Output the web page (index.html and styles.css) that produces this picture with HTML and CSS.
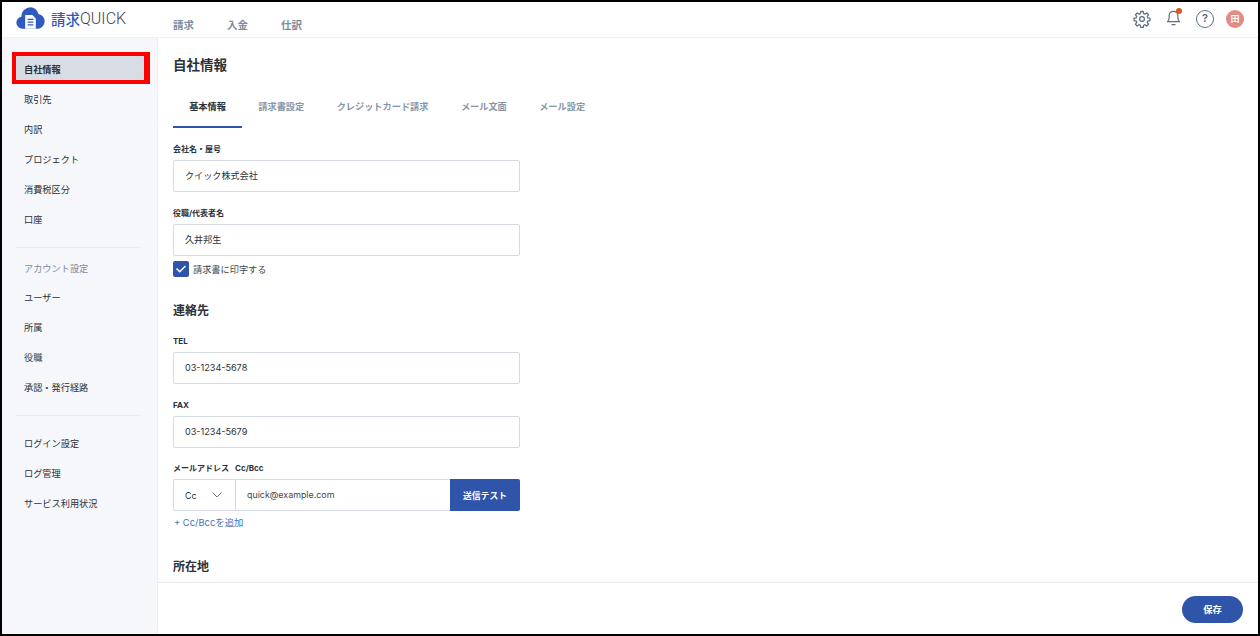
FILE: index.html
```html
<!DOCTYPE html>
<html lang="ja">
<head>
    <meta charset="UTF-8">
    <title>自社情報</title>
    <link rel="stylesheet" href="styles.css">
</head>
<body>
    <div class="frame">
        <header class="topbar">
            <div class="logo">
                <svg class="logo-mark" viewBox="0 0 30 22" width="29" height="22">
                    <path d="M6.500 22a6.200 6.200 0 0 1-1-12.300A9.500 9.500 0 0 1 15 0a8.500 8.500 0 0 1 8.300 6.800A7.700 7.700 0 0 1 23 22z" fill="#2f5bc0"/>
                    <path d="M9.500 8h7.500l3.500 3.500V22h-11z" fill="#fff"/>
                    <path d="M12 12.500h6M12 15.300h6M12 18.100h6" stroke="#2f5bc0" stroke-width="1.200"/>
                </svg>
                <span class="logo-ja">請求</span><span class="logo-en">QUICK</span>
            </div>
            <nav class="topnav">
                <a>請求</a>
                <a>入金</a>
                <a>仕訳</a>
            </nav>
            <div class="tools">
                <svg viewBox="0 0 24 24" width="18" height="18" fill="none" stroke="#5c6f82" stroke-width="1.700" stroke-linejoin="round">
                    <circle cx="12" cy="12" r="3.200"/>
                    <path d="M10.300 2h3.400l.5 2.900 1.700.7 2.400-1.700 2.400 2.400-1.700 2.400.7 1.700 2.900.5v3.400l-2.900.5-.7 1.700 1.700 2.400-2.400 2.400-2.400-1.700-1.700.7-.5 2.900h-3.400l-.5-2.900-1.700-.7-2.400 1.700-2.400-2.400 1.700-2.400-.7-1.700-2.900-.5v-3.400l2.900-.5.7-1.700-1.700-2.400 2.400-2.400 2.400 1.700 1.700-.7z"/>
                </svg>
                <span class="bell">
                    <svg viewBox="0 0 20 22" width="15" height="17" fill="none" stroke="#5c6f82" stroke-width="1.600" stroke-linejoin="round" stroke-linecap="round">
                        <path d="M2 16.500c1.500-1.500 2.200-3 2.200-5.500V8.500a5.800 5.800 0 0 1 11.600 0V11c0 2.500.7 4 2.200 5.500z"/>
                        <path d="M8 20.500h4"/>
                    </svg>
                    <i class="dot"></i>
                </span>
                <span class="help">?</span>
                <span class="avatar">田</span>
            </div>
        </header>
        <div class="body-row">
            <aside class="sidebar">
                <ul class="menu">
                    <li class="active">自社情報<span class="marker"></span></li>
                    <li>取引先</li>
                    <li>内訳</li>
                    <li>プロジェクト</li>
                    <li>消費税区分</li>
                    <li>口座</li>
                </ul>
                <hr class="divider">
                <p class="menu-title">アカウント設定</p>
                <ul class="menu">
                    <li>ユーザー</li>
                    <li>所属</li>
                    <li>役職</li>
                    <li>承認・発行経路</li>
                </ul>
                <hr class="divider second">
                <ul class="menu">
                    <li>ログイン設定</li>
                    <li>ログ管理</li>
                    <li>サービス利用状況</li>
                </ul>
            </aside>
            <div class="main">
                <div class="content">
                    <h1>自社情報</h1>
                    <div class="tabs">
                        <a class="tab current">基本情報</a>
                        <a class="tab">請求書設定</a>
                        <a class="tab">クレジットカード請求</a>
                        <a class="tab">メール文面</a>
                        <a class="tab">メール設定</a>
                    </div>
                    <form class="form">
                        <label class="label">会社名・屋号</label>
                        <div class="input">クイック株式会社</div>
                        <label class="label">役職/代表者名</label>
                        <div class="input">久井邦生</div>
                        <div class="check">
                            <span class="box">
                                <svg viewBox="0 0 16 16" width="16" height="16" fill="none" stroke="#fff" stroke-width="1.500"><path d="M3.500 7.500l3.200 3.200 5.800-5.700"/></svg>
                            </span>
                            請求書に印字する
                        </div>
                        <h2>連絡先</h2>
                        <label class="label">TEL</label>
                        <div class="input">03-1234-5678</div>
                        <label class="label">FAX</label>
                        <div class="input">03-1234-5679</div>
                        <label class="label mail-row"><span class="mail-label">メールアドレス</span>Cc/Bcc</label>
                        <div class="input-group">
                            <div class="select">Cc
                                <svg viewBox="0 0 10 6" width="10" height="6" fill="none" stroke="#6b7785" stroke-width="1"><path d="M.5.500l4.500 4.500 4.500-4.500"/></svg>
                            </div>
                            <div class="mail">quick@example.com</div>
                            <button type="button" class="test">送信テスト</button>
                        </div>
                        <a class="add">+ Cc/Bccを追加</a>
                        <h2 class="place">所在地</h2>
                    </form>
                </div>
                <footer class="footer">
                    <button type="button" class="save">保存</button>
                </footer>
            </div>
        </div>
    </div>
</body>
</html>
```

FILE: styles.css
```css
* {
    box-sizing: border-box;
}
html, body {
    margin: 0;
    height: 100%;
}
body {
    font-family: Inter, "Noto Sans CJK JP", sans-serif;
    color: #2b3138;
    background-color: #fff;
    overflow: hidden;
}
.frame {
    height: 636px;
    border: 2px solid #000;
    display: flex;
    flex-direction: column;
    overflow: hidden;
}

/* top bar */
.topbar {
    height: 36px;
    flex: none;
    display: flex;
    align-items: center;
    border-bottom: 1px solid #eef0f3;
    background-color: #fff;
}
.logo {
    width: 171px;
    padding-left: 14px;
    display: flex;
    align-items: center;
    height: 100%;
    padding-bottom: 3px;
}
.logo-mark {
    margin-right: 6px;
}
.logo-ja {
    font-size: 14.500px;
    font-weight: 500;
    color: #2f5bb5;
}
.logo-en {
    font-family: Roboto, sans-serif;
    font-size: 16px;
    font-weight: 300;
    color: #3d444c;
}
.topnav {
    display: flex;
    gap: 33px;
    padding-top: 10px;
}
.topnav a {
    font-size: 10.500px;
    font-weight: 700;
    color: #7d8d9e;
}
.tools {
    margin-left: auto;
    padding-right: 14px;
    padding-bottom: 1px;
    display: flex;
    align-items: center;
    gap: 12px;
}
.bell {
    position: relative;
    display: flex;
    margin: 0 3px 3px;
}
.dot {
    position: absolute;
    top: -1px;
    right: -1px;
    width: 6px;
    height: 6px;
    border-radius: 50%;
    background-color: #e0561f;
}
.help {
    width: 18px;
    height: 18px;
    border: 1.500px solid #5c6f82;
    border-radius: 50%;
    font-size: 11px;
    font-weight: 600;
    line-height: 15px;
    text-align: center;
    color: #5c6f82;
}
.avatar {
    width: 18px;
    height: 18px;
    border-radius: 50%;
    background-color: #e58b86;
    font-size: 9px;
    font-weight: 700;
    line-height: 18px;
    text-align: center;
    color: #fff;
}

/* sidebar */
.body-row {
    flex: 1;
    min-height: 0;
    display: flex;
}
.sidebar {
    width: 156px;
    flex: none;
    padding: 18px 14px 0;
    background-color: #f5f7fb;
    border-right: 1px solid #eceef2;
}
.menu {
    list-style: none;
    margin: 0;
    padding: 0;
}
.menu li {
    position: relative;
    height: 30px;
    padding: 0 8px;
    margin-right: -1px;
    font-size: 9.200px;
    line-height: 27px;
    color: #2b3138;
}
.menu .active {
    height: 24px;
    margin-bottom: 6px;
    font-weight: 700;
    background-color: #d8dce5;
    border-radius: 2px;
}
.marker {
    position: absolute;
    top: -4px;
    left: -4px;
    right: -6px;
    bottom: -4px;
    border: 4px solid #f00;
    border-right-width: 6px;
}
.divider {
    height: 1px;
    margin: 11px 2px 0 0;
    border: none;
    background-color: #e9ebef;
}
.divider.second {
    margin: 11px 2px 14px 0;
}
.menu-title {
    margin: 15px 0 9px;
    padding-left: 8px;
    font-size: 9.200px;
    line-height: 12px;
    color: #7c8a99;
}

/* main */
.main {
    flex: 1;
    min-width: 0;
    display: flex;
    flex-direction: column;
}
.content {
    flex: 1;
    min-height: 0;
    overflow: hidden;
    padding: 17px 15px 0;
}
h1 {
    margin: 0;
    font-size: 13.500px;
    font-weight: 700;
    line-height: 20px;
}
.tabs {
    display: flex;
    margin-top: 17px;
}
.tab {
    height: 36px;
    padding: 0 16.200px;
    font-size: 9.200px;
    font-weight: 700;
    line-height: 30px;
    color: #8696a5;
    white-space: nowrap;
}
.tab.current {
    color: #2b3138;
    border-bottom: 2px solid #2f55ab;
}
.form {
    width: 347px;
}
.label {
    display: block;
    margin: 15px 0 4px;
    font-size: 8px;
    font-weight: 700;
    line-height: 13px;
}
.label.mail-row {
    margin-top: 14px;
}
.mail-label {
    margin-right: 6px;
}
.input {
    height: 32px;
    padding: 0 11px;
    border: 1px solid #d6dae2;
    border-radius: 2px;
    font-size: 9.100px;
    line-height: 30px;
    background-color: #fff;
}
.check {
    display: flex;
    align-items: center;
    gap: 4px;
    margin-top: 5px;
    font-size: 9.200px;
    color: #3e464e;
}
.box {
    width: 16px;
    height: 16px;
    border-radius: 2px;
    background-color: #2f55ab;
}
.box svg {
    display: block;
}
h2 {
    margin: 25px 0 0;
    font-size: 12px;
    font-weight: 700;
    line-height: 18px;
}
.input-group {
    display: flex;
    height: 32px;
    border: 1px solid #d6dae2;
    border-radius: 2px;
    font-size: 8.900px;
}
.select {
    width: 62px;
    padding: 0 13px 0 11px;
    display: flex;
    align-items: center;
    justify-content: space-between;
    border-right: 1px solid #d6dae2;
}
.mail {
    flex: 1;
    padding-left: 11px;
    line-height: 30px;
    color: #3e464e;
}
.test {
    width: 70px;
    margin: -1px;
    border: none;
    border-radius: 0 2px 2px 0;
    font-family: inherit;
    font-size: 8.800px;
    font-weight: 700;
    color: #fff;
    background-color: #2f55ab;
}
.add {
    display: block;
    margin-top: 5px;
    padding-left: 1px;
    font-size: 9.400px;
    line-height: 13px;
    color: #4a6fb8;
}
.place {
    margin-top: 29px;
}

/* footer */
.footer {
    height: 52px;
    flex: none;
    display: flex;
    justify-content: flex-end;
    align-items: center;
    padding: 1px 15px 0 0;
    border-top: 1px solid #e7e9ed;
    box-shadow: 0 -3px 5px rgba(0, 0, 0, 0.02);
    background-color: #fff;
}
.save {
    width: 61px;
    height: 27px;
    border: none;
    border-radius: 14px;
    font-family: inherit;
    font-size: 9.200px;
    font-weight: 700;
    color: #fff;
    background-color: #2f55ab;
}
```
